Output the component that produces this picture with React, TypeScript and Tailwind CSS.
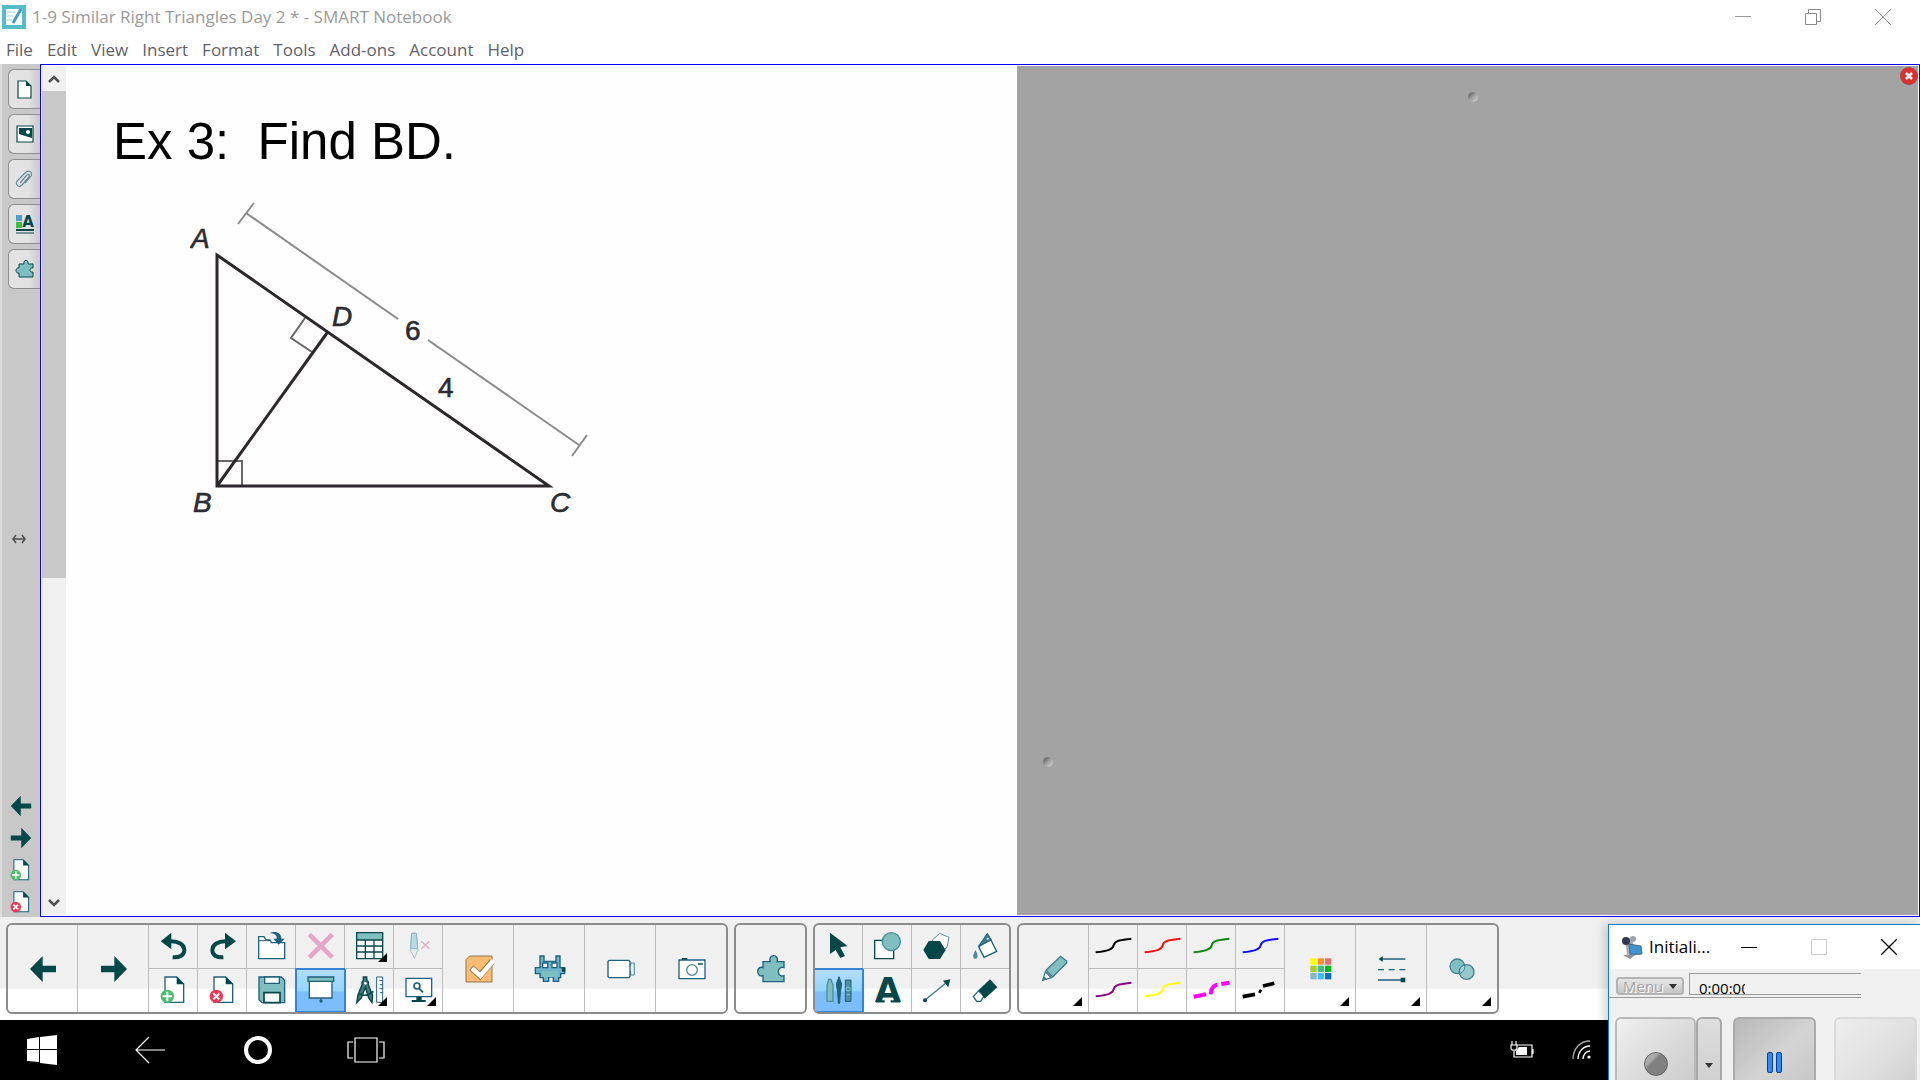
import type { ReactNode } from 'react';

const DARK = '#06484a';
const TEAL = '#7fbfc0';
const LINE = '#1f607c';

const MENUS = ['File', 'Edit', 'View', 'Insert', 'Format', 'Tools', 'Add-ons', 'Account', 'Help'];

/** Toolbar glyph: an 84-unit square drawn at 28px. */
function Glyph({ children }: { children: ReactNode }) {
  return <svg viewBox="0 0 84 84" className="h-7 w-7 overflow-visible" fill="none" aria-hidden="true">{children}</svg>;
}

const ArrowLeft = () => <Glyph><path d="M3 42 41 3V32H81V52H41V81Z" fill={DARK} /></Glyph>;
const ArrowRight = () => <Glyph><path d="M81 42 43 3V32H3V52H43V81Z" fill={DARK} /></Glyph>;

const Undo = () => (
  <Glyph>
    <path d="M2 28 34 2V52Z" fill={DARK} />
    <path d="M30 28C56 27 73 38 73 54C73 70 60 77 38 76" stroke={DARK} strokeWidth="12" />
  </Glyph>
);
const Redo = () => (
  <Glyph>
    <path d="M81 28 48 2V52Z" fill={DARK} />
    <path d="M52 28C27 27 10 38 10 54C10 70 22 77 43 76" stroke={DARK} strokeWidth="12" />
  </Glyph>
);
const OpenFile = () => (
  <Glyph>
    <path d="M2 80V14H18L24 24H36L40 32H80V80Z" fill="#fff" stroke={LINE} strokeWidth="4" />
    <path d="M2 26H36" stroke={LINE} strokeWidth="3" />
    <path d="M34 4C52-6 70 2 70 20H80L62 38 46 20H56C58 10 50 4 34 4Z" fill={LINE} />
  </Glyph>
);
const Cross = () => <Glyph><path d="M7 7 76 76M76 7 7 76" stroke="#e6a6c6" strokeWidth="14" /></Glyph>;
const TableIcon = () => (
  <Glyph>
    <path d="M2 2H80V80H2Z" fill="#fff" />
    <path d="M2 2H80V24H2Z" fill={TEAL} />
    <path d="M2 2H80V80H2ZM2 24H80M2 42H80M2 60H80M28 24V80M54 24V80" stroke={DARK} strokeWidth="4" />
  </Glyph>
);
const PenOff = () => (
  <Glyph>
    <path d="M20 4H34L39 54 28 79 16 54Z" fill="#e8eef0" stroke="#a9bcc4" strokeWidth="3" />
    <path d="M20 4H34L38 50H17Z" fill="#b5dbe6" stroke="#93b4c4" strokeWidth="3" />
    <path d="M49 28 73 50M73 28 49 50" stroke="#e9a9bd" strokeWidth="4" />
  </Glyph>
);
function PageIcon({ badge }: { badge?: 'add' | 'remove' }) {
  return (
    <Glyph>
      <path d="M15 3H50L71 24V79H15Z" fill="#fff" stroke={LINE} strokeWidth="4" />
      <path d="M50 2 73 25H50Z" fill={DARK} />
      {badge === 'add' && <><circle cx="22" cy="61" r="20" fill="#4dbd6c" /><path d="M22 47V75M8 61H36" stroke="#fff" strokeWidth="6" /></>}
      {badge === 'remove' && <><circle cx="22" cy="61" r="20" fill="#ea3a58" /><path d="M13 52 31 70M31 52 13 70" stroke="#fff" strokeWidth="6" /></>}
    </Glyph>
  );
}
const Save = () => (
  <Glyph>
    <path d="M3 3H70L80 13V80H12L3 71Z" fill={TEAL} stroke={LINE} strokeWidth="4" />
    <path d="M20 3H64V22H20Z" fill="#fff" stroke={LINE} strokeWidth="4" />
    <path d="M18 80V50H66V80Z" fill="#fff" stroke={DARK} strokeWidth="5" />
  </Glyph>
);
const Screen = () => (
  <Glyph>
    <path d="M7 16H75V66H7Z" fill="#fff" stroke={LINE} strokeWidth="4" />
    <path d="M3 3H80V16H3Z" fill={TEAL} stroke={LINE} strokeWidth="4" />
    <path d="M42 66V76" stroke={LINE} strokeWidth="4" />
    <circle cx="42" cy="75" r="5" fill={LINE} />
  </Glyph>
);
const Compass = () => (
  <Glyph>
    <path d="M22 3H32L33 14C38 16 38 22 37 26L50 58 48 80 38 66 28 34 16 66 2 80 6 56 18 26C17 20 18 16 22 14Z" fill="#3f7a7c" stroke={DARK} strokeWidth="4" />
    <path d="M10 54C22 60 36 60 52 46" stroke={DARK} strokeWidth="5" />
    <circle cx="28" cy="22" r="4" fill="#fff" />
    <path d="M62 3H80V79H62Z" fill="#fff" stroke={LINE} strokeWidth="3" />
    <path d="M80 14H70M80 26H72M80 38H70M80 50H72" stroke={LINE} strokeWidth="3" />
  </Glyph>
);
const Monitor = () => (
  <Glyph>
    <path d="M3 7H80V62H3Z" fill="#fff" stroke={LINE} strokeWidth="4" />
    <path d="M34 62H50V72H62V78H20V72H34Z" fill={DARK} />
    <circle cx="36" cy="30" r="9" stroke={LINE} strokeWidth="5" />
    <path d="M42 37 54 49" stroke={LINE} strokeWidth="6" />
  </Glyph>
);
const Check = () => (
  <Glyph>
    <path d="M3 81V14L14 3H81V81Z" fill="#fcbb70" stroke="#8c7a4c" strokeWidth="3" />
    <path d="M19 38 45 62 82 19" stroke="#8c7a4c" strokeWidth="19" />
    <path d="M21 40 46 62 85 17" stroke="#fff" strokeWidth="14" />
  </Glyph>
);
const Robot = () => (
  <Glyph>
    <path d="M12 3H24V19H60V3H72V38H86V56H74V68H68V79H52V66H38V79H22V68H12V56H-2V38H12Z" fill="#6db3cc" stroke={LINE} strokeWidth="4" />
    <path d="M18 48H66V66H18Z" fill={TEAL} />
    <path d="M20 24H35V38H20ZM48 24H63V38H48Z" fill="#fff" stroke={LINE} strokeWidth="4" />
    <path d="M78 38H88V50H78Z" fill={DARK} />
  </Glyph>
);
const Camcorder = () => (
  <Glyph>
    <path d="M66 32H71V24H82V60H71V50H66Z" fill="#e7f2f3" stroke="#4d8795" strokeWidth="3" />
    <path d="M6 16H66L69 20V64L66 68H6L3 65V19Z" fill="#fff" stroke={LINE} strokeWidth="4" />
  </Glyph>
);
const Camera = () => (
  <Glyph>
    <path d="M12 9H28V15H12Z" fill={DARK} />
    <path d="M3 15H81V71H3Z" fill="#fff" stroke={LINE} strokeWidth="4" />
    <circle cx="42" cy="45" r="16" stroke="#4c8795" strokeWidth="4" />
    <path d="M60 27H74" stroke={DARK} strokeWidth="5" />
  </Glyph>
);
const Puzzle = () => (
  <Glyph>
    <path d="M18 80V62C6 66 2 56 2 49S8 34 18 38V20H40C36 10 42 2 50 2S64 10 60 20H81V38C70 34 64 42 64 50S70 66 81 62V80Z" fill={TEAL} stroke={LINE} strokeWidth="4" />
  </Glyph>
);
const Pointer = () => <Glyph><path d="M15 2 68 42 46 46 60 72 46 78 32 54 15 66Z" fill={DARK} /></Glyph>;
const Shapes = () => (
  <Glyph>
    <path d="M2 25H59V80H2Z" fill="#fff" stroke={DARK} strokeWidth="4" />
    <circle cx="52" cy="29" r="27" fill={TEAL} stroke="#4d8c9c" strokeWidth="4" />
  </Glyph>
);
const Hexagons = () => (
  <Glyph>
    <path d="M28 24 50 4 78 16 72 46 50 64Z" fill="#fff" stroke="#5d8a9c" strokeWidth="3" />
    <path d="M1 54 17 27H51L68 54 51 81H17Z" fill={DARK} />
  </Glyph>
);
const Bucket = () => (
  <Glyph>
    <path d="M20 44 56 22 74 58 36 76Z" fill="#fff" stroke={LINE} strokeWidth="4" />
    <path d="M20 42 46 4 58 24Z" fill="#3f7a8c" stroke={LINE} strokeWidth="3" />
    <circle cx="47" cy="20" r="3" fill="#fff" />
    <path d="M10 54C16 64 18 70 16 76C14 82 6 82 4 76C2 70 6 64 10 54Z" fill="#4f8a9c" />
  </Glyph>
);
const Pens = () => (
  <Glyph>
    <path d="M6 28 11 10H18L24 28V76H6Z" fill={TEAL} stroke="#4d8c9c" strokeWidth="4" />
    <path d="M42 2 50 24 46 50 44 82H40L38 50 34 24Z" fill={LINE} stroke={LINE} strokeWidth="3" />
    <path d="M61 12H78V76H61Z" fill="#4f8fa0" stroke={LINE} strokeWidth="3" />
    <path d="M64 34H75V44H64ZM64 56H75" stroke={TEAL} strokeWidth="3" />
  </Glyph>
);
const TextIcon = () => (
  <Glyph>
    <text x="42" y="79" textAnchor="middle" fontFamily="'DejaVu Sans', sans-serif" fontWeight="700" fontSize="102" fill={DARK}>A</text>
    <path d="M6 76H32M50 76H78" stroke={DARK} strokeWidth="7" />
  </Glyph>
);
const LineIcon = () => (
  <Glyph>
    <path d="M6 72 70 20" stroke="#3f7a7c" strokeWidth="4" />
    <path d="M82 10 76 34 60 14Z" fill={DARK} />
    <circle cx="6" cy="73" r="6" fill={DARK} />
  </Glyph>
);
const Eraser = () => (
  <Glyph>
    <path d="M4 62 20 44 36 60 26 76H14Z" fill="#fff" stroke={LINE} strokeWidth="4" />
    <path d="M20 42 54 10 76 34 38 68Z" fill={DARK} />
  </Glyph>
);
const Pencil = () => (
  <Glyph>
    <path d="M8 76 16 50 34 68Z" fill="#fff" stroke="#42788c" strokeWidth="4" />
    <path d="M18 46 62 4 80 18 80 24 38 66Z" fill={TEAL} stroke="#42788c" strokeWidth="4" />
    <path d="M8 77 12 64 20 72Z" fill="#42788c" />
  </Glyph>
);
const Palette = () => (
  <Glyph>
    {['#ffff00', '#ff8c3c', '#e07070', '#a8cc30', '#40c080', '#00b818', '#84b8c0', '#3cbcfc', '#1070b8'].map((c, i) => (
      <rect key={c} x={10 + (i % 3) * 22} y={10 + Math.floor(i / 3) * 22} width="19" height="19" fill={c} />
    ))}
  </Glyph>
);
const LineStyles = () => (
  <Glyph>
    <path d="M8 12H82M0 75H76" stroke={LINE} strokeWidth="4" />
    <path d="M0 44H82" stroke={LINE} strokeWidth="4" strokeDasharray="18 14" />
    <path d="M2 12 14 3V21ZM68 68H82V82H68Z" fill={DARK} />
  </Glyph>
);
const Transparency = () => (
  <Glyph>
    <circle cx="25" cy="34" r="22" fill={TEAL} stroke="#467f93" strokeWidth="4" />
    <circle cx="53" cy="51" r="22" fill={TEAL} fillOpacity=".8" stroke="#467f93" strokeWidth="4" />
    <path d="M46 30C49 40 45 50 34 55C29 44 35 34 46 30Z" fill="#a9d5dc" stroke="#467f93" strokeWidth="3" />
  </Glyph>
);

function PenStroke({ color, variant = 'solid' }: { color: string; variant?: 'solid' | 'dash' | 'dot' }) {
  return (
    <Glyph>
      {variant === 'solid' && <path d="M-13 61C20 57 38 54 41 40C44 24 66 24 94 20" stroke={color} strokeWidth="6" />}
      {variant === 'dash' && <path d="M-13 62 24 55M38 55C39 38 46 28 58 26M70 24 94 20" stroke={color} strokeWidth="12" />}
      {variant === 'dot' && <path d="M-13 62 24 55M36 44 43 48M48 30 82 22" stroke={color} strokeWidth="11" />}
    </Glyph>
  );
}

type ToolProps = { label: string; icon: ReactNode; active?: boolean; menu?: boolean; big?: boolean };

function Tool({ label, icon, active, menu, big }: ToolProps) {
  return (
    <button
      aria-label={label}
      className={`relative flex items-center justify-center ${big ? 'h-[87px] w-[71px]' : 'h-11 w-[49px]'} ${active ? 'bg-linear-to-b from-[#b5dcfc] from-0% via-[#93d6ff] via-50% to-[#7cbdfb] to-55% outline-2 -outline-offset-1 outline-[#3583d4]' : ''}`}
    >
      {icon}
      {menu && <svg viewBox="0 0 9 9" className="absolute right-[7px] bottom-[6px] h-[9px] w-[9px]" aria-hidden="true"><path d="M9 0V9H0Z" /></svg>}
    </button>
  );
}

/** Two tools stacked in one narrow column. */
function Pair({ top, bottom }: { top: ToolProps; bottom: ToolProps }) {
  return (
    <div className="flex h-[87px] flex-col divide-y divide-[#bdbdbd]">
      <Tool {...top} />
      <Tool {...bottom} />
    </div>
  );
}

function Group({ children }: { children: ReactNode }) {
  return <div className="flex shrink-0 overflow-hidden rounded-md border-2 border-[#8c8c8c] [&>*+*]:shadow-[-1px_0_0_#bdbdbd] [&>*:first-child]:-ml-px [&>*:last-child]:-mr-px">{children}</div>;
}

const SIDE_TABS: { label: string; icon: ReactNode }[] = [
  { label: 'Page Sorter', icon: <><path d="M3 2H11L16 7V19H3Z" fill="#fff" stroke={DARK} strokeWidth="1.2" /><path d="M11 2V7H16Z" fill={DARK} /></> },
  { label: 'Gallery', icon: <><path d="M2 2H18V18H2Z" fill="#fff" stroke={DARK} strokeWidth="1.2" /><path d="M4 4H17V14C12 13 8 11 4 10Z" fill={DARK} /><circle cx="13" cy="8" r="2" fill="#fff" /></> },
  { label: 'Attachments', icon: <path d="M5 14 12 6C13 4 15 6 14 8L7 16C4 19 0 16 2 12L10 4C13 0 18 3 16 7L10 14" fill="none" stroke="#5f8a95" strokeWidth="1.2" /> },
  { label: 'Properties', icon: <><path d="M1 1H7V7H1Z" fill="#4e9fd0" /><path d="M1 8H7V14H1Z" fill="#3cbf3c" /><text x="13" y="13" textAnchor="middle" fontFamily="'DejaVu Sans', sans-serif" fontWeight="700" fontSize="15" fill={DARK}>A</text><path d="M1 16H19" stroke={DARK} strokeWidth="2" /><path d="M1 19H19" stroke={DARK} strokeWidth="1" /></> },
  { label: 'Add-ons', icon: <path d="M4 18V14C0 15 0 8 4 9V5H9C8 0 14 0 13 5H18V9C14 8 14 14 18 13V18Z" fill={TEAL} stroke={DARK} strokeWidth="1" /> },
];

const PAGE_BUTTONS = [
  { label: 'Previous page', icon: <ArrowLeft /> },
  { label: 'Next page', icon: <ArrowRight /> },
  { label: 'Add page', icon: <PageIcon badge="add" /> },
  { label: 'Delete page', icon: <PageIcon badge="remove" /> },
];

function Sidebar() {
  return (
    <aside className="flex w-10 shrink-0 flex-col border-l-2 border-[#dcdcdc] bg-[#c8c8c8] pt-[5px]">
      <div className="flex flex-col gap-[5px] pl-[6px]">
        {SIDE_TABS.map((t) => (
          <button key={t.label} aria-label={t.label} className="flex h-10 items-center justify-center rounded-l-md border border-r-0 border-[#8e8e8e] bg-linear-to-r from-[#e3e3e3] from-60% to-[#c9c9c9]">
            <svg viewBox="0 0 20 20" className="h-5 w-5" aria-hidden="true">{t.icon}</svg>
          </button>
        ))}
      </div>
      <div className="flex flex-1 items-center justify-center pr-1">
        <svg viewBox="0 0 14 10" className="h-[10px] w-[14px]" fill="none" stroke="#4d4d4d" strokeWidth="1.5" aria-hidden="true"><path d="M4 1 1 5 4 9M10 1 13 5 10 9M1 5H13" /></svg>
      </div>
      <div className="flex flex-col">
        {PAGE_BUTTONS.map((b) => (
          <button key={b.label} aria-label={b.label} className="flex h-8 items-center justify-center pt-[2px] [&_svg]:h-[22px] [&_svg]:w-[22px]">{b.icon}</button>
        ))}
      </div>
    </aside>
  );
}

function Triangle() {
  return (
    <svg viewBox="190 200 400 320" className="mt-7 ml-[77px] h-80 w-[400px]" fill="none" role="img" aria-label="Right triangle ABC with altitude BD">
      <g stroke="#8a8a8a" strokeWidth="2">
        <path d="M246 213 398 319M428 340 579 445" />
        <path d="M254 203 238 224M587 435 572 456" />
        <path d="M305 318 291 338 312 352M217 461H242V486" stroke="#666" />
      </g>
      <path d="M217 255V486H549ZM217 486 327 333" stroke="#2b272a" strokeWidth="3" />
      <g fontFamily="'Liberation Sans', sans-serif" fontSize="28" fill="#2d2b33" stroke="#2d2b33" strokeWidth=".6">
        <g fontStyle="italic">
          <text x="191" y="248">A</text>
          <text x="332" y="326">D</text>
          <text x="193" y="512">B</text>
          <text x="550" y="512">C</text>
        </g>
        <text x="405" y="340">6</text>
        <text x="438" y="397">4</text>
      </g>
    </svg>
  );
}

function Dimple({ className }: { className: string }) {
  return <span className={`absolute h-[10px] w-[10px] rounded-full bg-linear-to-br from-[#555] via-[#a0a0a0] to-[#d8d8d8] ${className}`} />;
}

function Workspace() {
  return (
    <main className="flex min-w-0 flex-1 border border-[#0000f0] bg-white p-px">
      <div className="flex w-6 shrink-0 flex-col items-center bg-[#f0f0f0]">
        <button aria-label="Scroll up" className="flex h-[25px] items-center">
          <svg viewBox="0 0 12 8" className="h-2 w-3" fill="none" stroke="#505050" strokeWidth="2.5"><path d="M1 7 6 2 11 7" /></svg>
        </button>
        <div className="w-full flex-1"><div className="h-[61%] w-full bg-[#c8c8c8]" /></div>
        <button aria-label="Scroll down" className="flex h-[25px] items-center">
          <svg viewBox="0 0 12 8" className="h-2 w-3" fill="none" stroke="#505050" strokeWidth="2.5"><path d="M1 1 6 6 11 1" /></svg>
        </button>
      </div>
      <div className="grid min-w-0 flex-1 grid-cols-[951fr_901fr]">
        <section className="bg-[#fefefe] pt-[46px] pl-[47px]">
          <h1 className="font-['Liberation_Sans',Arial,sans-serif] text-[51px] leading-[60px] whitespace-pre text-black">{'Ex 3:  Find BD.'}</h1>
          <Triangle />
        </section>
        <section className="relative bg-[#a3a3a3]">
          <Dimple className="top-[26px] left-[50%]" />
          <Dimple className="top-[691px] left-[26px]" />
          <button aria-label="Close" className="absolute top-[2px] right-[1px] flex h-4 w-4 items-center justify-center rounded-full bg-[#e02f2f] ring-1 ring-[#b04040]">
            <svg viewBox="0 0 8 8" className="h-2 w-2" stroke="#fff" strokeWidth="2.5"><path d="M1 1 7 7M7 1 1 7" /></svg>
          </button>
        </section>
      </div>
    </main>
  );
}

function Toolbar() {
  return (
    <div className="flex h-[103px] shrink-0 gap-[6px] overflow-hidden bg-linear-to-b from-[#f0f0f0] from-69% to-white to-70% py-[6px] pl-[6px]">
      <Group>
        <Tool big label="Previous page" icon={<ArrowLeft />} />
        <Tool big label="Next page" icon={<ArrowRight />} />
        <Pair top={{ label: 'Undo', icon: <Undo /> }} bottom={{ label: 'Add page', icon: <PageIcon badge="add" /> }} />
        <Pair top={{ label: 'Redo', icon: <Redo /> }} bottom={{ label: 'Delete page', icon: <PageIcon badge="remove" /> }} />
        <Pair top={{ label: 'Open', icon: <OpenFile /> }} bottom={{ label: 'Save', icon: <Save /> }} />
        <Pair top={{ label: 'Delete', icon: <Cross /> }} bottom={{ label: 'Screen shade', icon: <Screen />, active: true }} />
        <Pair top={{ label: 'Table', icon: <TableIcon />, menu: true }} bottom={{ label: 'Measurement tools', icon: <Compass />, menu: true }} />
        <Pair top={{ label: 'Clear ink', icon: <PenOff /> }} bottom={{ label: 'View screens', icon: <Monitor />, menu: true }} />
        <Tool big label="Assessment" icon={<Check />} />
        <Tool big label="Activity builder" icon={<Robot />} />
        <Tool big label="Recorder" icon={<Camcorder />} />
        <Tool big label="Screen capture" icon={<Camera />} />
      </Group>
      <Group><Tool big label="Add-ons" icon={<Puzzle />} /></Group>
      <Group>
        <Pair top={{ label: 'Select', icon: <Pointer /> }} bottom={{ label: 'Pens', icon: <Pens />, active: true }} />
        <Pair top={{ label: 'Shapes', icon: <Shapes /> }} bottom={{ label: 'Text', icon: <TextIcon /> }} />
        <Pair top={{ label: 'Regular polygons', icon: <Hexagons /> }} bottom={{ label: 'Lines', icon: <LineIcon /> }} />
        <Pair top={{ label: 'Fill', icon: <Bucket /> }} bottom={{ label: 'Eraser', icon: <Eraser /> }} />
      </Group>
      <Group>
        <Tool big label="Pen type" icon={<Pencil />} menu />
        <Pair top={{ label: 'Black pen', icon: <PenStroke color="#000" /> }} bottom={{ label: 'Purple pen', icon: <PenStroke color="#8b008b" /> }} />
        <Pair top={{ label: 'Red pen', icon: <PenStroke color="#ff0a0a" /> }} bottom={{ label: 'Yellow pen', icon: <PenStroke color="#ffff00" /> }} />
        <Pair top={{ label: 'Green pen', icon: <PenStroke color="#0a850a" /> }} bottom={{ label: 'Magenta dashed pen', icon: <PenStroke color="#ff00ff" variant="dash" /> }} />
        <Pair top={{ label: 'Blue pen', icon: <PenStroke color="#1010ff" /> }} bottom={{ label: 'Black dotted pen', icon: <PenStroke color="#000" variant="dot" /> }} />
        <Tool big label="Color" icon={<Palette />} menu />
        <Tool big label="Line style" icon={<LineStyles />} menu />
        <Tool big label="Transparency" icon={<Transparency />} menu />
      </Group>
    </div>
  );
}

function Taskbar() {
  return (
    <footer className="flex h-[60px] shrink-0 items-center bg-black pr-[328px] pl-6 text-white">
      <nav className="flex gap-[72px] [&>button]:flex [&>button]:h-9 [&>button]:w-9 [&>button]:items-center [&>button]:justify-center">
        <button aria-label="Start">
          <svg viewBox="0 0 30 30" className="h-[30px] w-[30px]" fill="#fff"><path d="M0 4 12 2V14H0ZM13 2 30 0V14H13ZM0 15H12V27L0 26ZM13 15H30V30L13 28Z" /></svg>
        </button>
        <button aria-label="Back">
          <svg viewBox="0 0 30 28" className="h-7 w-[30px]" fill="none" stroke="#fff" strokeWidth="1.2"><path d="M30 14H1M14 1 1 14 14 27" /></svg>
        </button>
        <button aria-label="Search">
          <svg viewBox="0 0 30 30" className="h-[30px] w-[30px]" fill="none" stroke="#fff" strokeWidth="4"><circle cx="15" cy="15" r="12" /></svg>
        </button>
        <button aria-label="Task view">
          <svg viewBox="0 0 38 26" className="h-[26px] w-[38px] shrink-0" fill="none" stroke="#fff" strokeWidth="1.2"><path d="M8 1H30V25H8ZM6 5H1V21H6M32 5H37V21H32" /></svg>
        </button>
      </nav>
      <div className="ml-auto flex items-center gap-[38px]">
        <svg viewBox="0 0 24 18" className="h-[18px] w-6" fill="none" stroke="#fff" strokeWidth="1.2" role="img" aria-label="Battery charging">
          <path d="M7 4H22V16H4V10M23 8V13M2 0V4M6 0V4M1 4H7V7C7 10 1 10 1 7Z" /><path d="M9 6H17V14H6V10Z" fill="#fff" stroke="none" />
        </svg>
        <svg viewBox="0 0 20 20" className="h-5 w-5" fill="none" stroke="#fff" strokeWidth="1.3" role="img" aria-label="Wi-Fi">
          <path d="M1 19C1 9 8 1 18 1" stroke="#aaa" /><path d="M6 19C6 12 11 6 18 6M11 19C11 15 14 11 18 11" /><circle cx="17" cy="17" r="1.6" fill="#fff" stroke="none" />
        </svg>
      </div>
    </footer>
  );
}

/** Small recorder window that floats over the corner of the desktop. */
function RecorderWindow() {
  return (
    <div className="absolute right-0 bottom-0 h-[156px] w-[312px] overflow-hidden border-t border-l border-[#0b82c8] bg-[#f0f0f0] font-['Open_Sans','Segoe_UI',sans-serif] shadow-[-3px_0_10px_#00000033]">
      <div className="flex h-11 items-center bg-white pl-3">
        <svg viewBox="0 0 22 24" className="h-6 w-[22px]" aria-hidden="true">
          <path d="M4 4 12 3V18L6 20Z" fill="#a9adb2" /><path d="M8 9 20 11 21 19 9 20Z" fill="#3c93cf" stroke="#567" />
          <circle cx="5" cy="6" r="4" fill="#2f3a4a" /><circle cx="12" cy="4" r="3" fill="#9aa2aa" /><path d="M2 20 14 20 9 24Z" fill="#8d9196" />
        </svg>
        <span className="ml-[6px] text-[17px] text-black">Initiali...</span>
        <div className="-mr-1 ml-auto flex [&>button]:flex [&>button]:h-11 [&>button]:w-[70px] [&>button]:items-center [&>button]:justify-center">
          <button aria-label="Minimize"><svg viewBox="0 0 16 16" className="h-4 w-4" stroke="#000"><path d="M0 8.5H16" /></svg></button>
          <button aria-label="Maximize"><svg viewBox="0 0 16 16" className="h-4 w-4" stroke="#ccc" fill="none"><path d="M.5 .5H15.5V15.5H.5Z" /></svg></button>
          <button aria-label="Close"><svg viewBox="0 0 16 16" className="h-4 w-4" stroke="#000" strokeWidth="1.3"><path d="M0 0 16 16M16 0 0 16" /></svg></button>
        </div>
      </div>
      <div className="relative flex h-[29px] w-[252px] items-start border-b border-[#9a9a9a]">
        <button className="mt-2 ml-[7px] flex h-[18px] w-[68px] items-center justify-between rounded border-2 border-[#b4b4b4] bg-linear-to-b from-[#e6e6e6] to-[#c6c6c6] px-[5px] text-[15px] leading-5 text-[#a4a4a4] text-shadow-[1px_1px_0_#fff]">
          Menu
          <svg viewBox="0 0 8 5" className="h-[5px] w-2"><path d="M0 0H8L4 5Z" fill="#333" /></svg>
        </button>
        <div className="mt-1 ml-[5px] flex h-[22px] flex-1 border border-r-0 border-[#9a9a9a] pl-[9px]">
          <div className="h-5 w-[46px] overflow-hidden text-[15px] leading-7 whitespace-nowrap text-black">0:00:00</div>
        </div>
      </div>
      <div className="flex pt-[19px] pl-[6px] [&>button]:flex [&>button]:h-[90px] [&>button]:justify-center [&>button]:rounded-md [&>button]:border-2">
        <button aria-label="Record" className="w-[81px] border-[#b9b9b9] bg-linear-135 from-[#f0f0f0] via-[#dadada] to-[#c6c6c6] pt-[33px]"><span className="h-6 w-6 rounded-full border border-[#666] bg-linear-135 from-[#aaa] from-30% to-[#808080] to-40%" /></button>
        <button aria-label="Record options" className="w-[26px] border-[#a8a8a8] bg-linear-to-b from-[#ddd] to-[#cbcbcb] pt-11"><svg viewBox="0 0 8 5" className="h-[5px] w-2"><path d="M0 0H8L4 5Z" fill="#333" /></svg></button>
        <button aria-label="Pause" className="ml-[11px] w-[83px] gap-[3px] border-[#aaa] bg-linear-135 from-[#b8b8b8] via-[#d4d4d4] to-[#c2c2c2] pt-[33px]"><span className="h-[21px] w-[6px] rounded-xs border border-[#0a3c9c] bg-[#2c8cf4]" /><span className="h-[21px] w-[6px] rounded-xs border border-[#0a3c9c] bg-[#2c8cf4]" /></button>
        <button aria-label="Stop" className="ml-[18px] w-[83px] border-[#dadada] bg-linear-135 from-[#eee] via-[#e0e0e0] to-[#c9c9c9]" />
      </div>
    </div>
  );
}

export default function App() {
  return (
    <div className="relative flex h-screen flex-col overflow-hidden bg-white font-['Open_Sans','Segoe_UI',sans-serif]">
      <header className="flex h-[34px] shrink-0 items-center pl-[2px]">
        <svg viewBox="0 0 24 24" className="h-6 w-6" aria-hidden="true">
          <path d="M0 0H24V24H0Z" fill="#55bcc9" /><path d="M4 4H20V20H4Z" fill="#fff" /><path d="M5 7H13M5 11H11M5 15H10" stroke="#cfe6f3" strokeWidth="2" /><path d="M19 4 11 18" stroke="#3d9bc6" strokeWidth="3" />
        </svg>
        <span className="ml-[6px] text-[17px] text-[#999]">1-9 Similar Right Triangles Day 2 * - SMART Notebook</span>
        <div className="ml-auto flex pr-[2px] [&>button]:flex [&>button]:h-[34px] [&>button]:w-[70px] [&>button]:items-center [&>button]:justify-center">
          <button aria-label="Minimize"><svg viewBox="0 0 16 16" className="h-4 w-4" stroke="#999"><path d="M0 7.5H16" /></svg></button>
          <button aria-label="Restore"><svg viewBox="0 0 16 16" className="h-4 w-4" stroke="#888" fill="none"><path d="M.5 4.5H11.5V15.5H.5ZM3.5 4V.5H15.5V12.5H12" /></svg></button>
          <button aria-label="Close"><svg viewBox="0 0 16 16" className="h-4 w-4" stroke="#999"><path d="M0 0 16 16M16 0 0 16" /></svg></button>
        </div>
      </header>
      <nav className="flex h-[30px] shrink-0 gap-[14px] pl-[6px] text-[17px] leading-8 text-[#5f5f6b]">
        {MENUS.map((m) => <button key={m}>{m}</button>)}
      </nav>
      <div className="flex min-h-0 flex-1">
        <Sidebar />
        <Workspace />
      </div>
      <Toolbar />
      <Taskbar />
      <RecorderWindow />
    </div>
  );
}
